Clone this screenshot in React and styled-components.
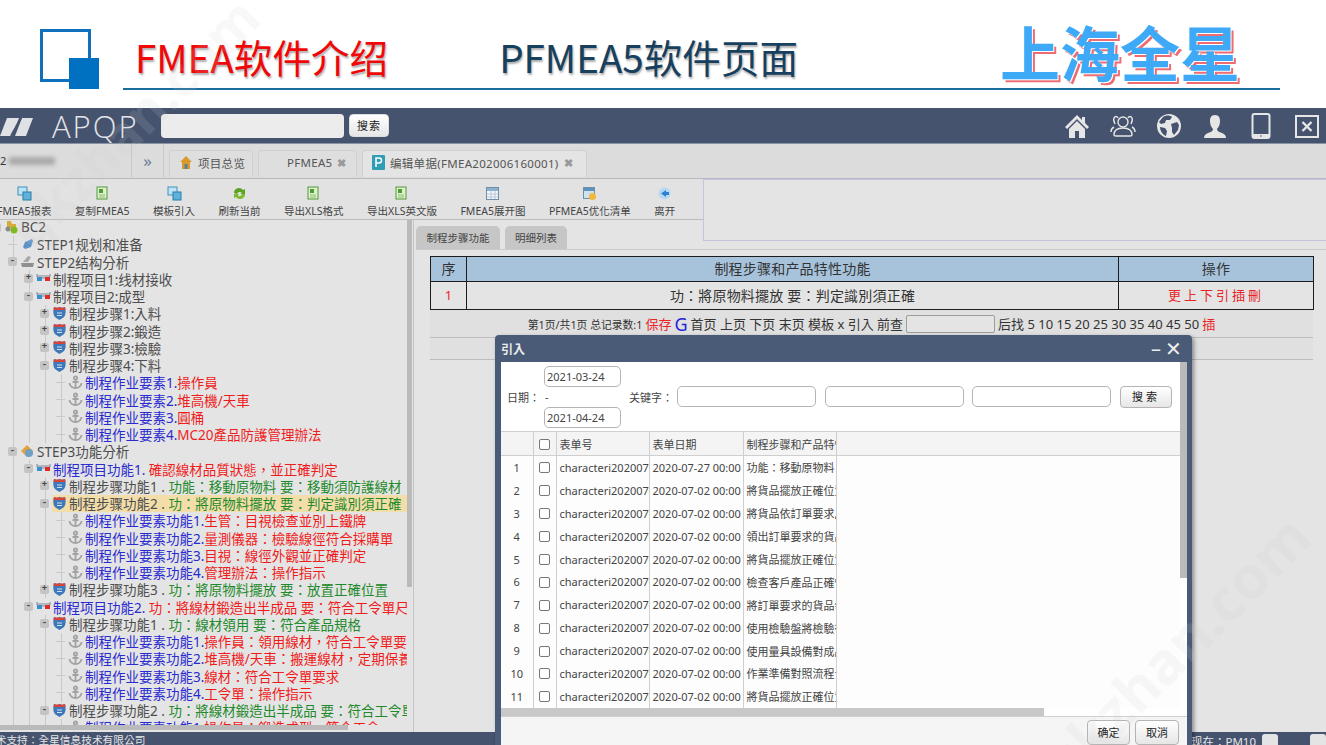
import React from 'react';
import styled, { createGlobalStyle } from 'styled-components';

const CJK = '"Noto Sans", "Noto Sans CJK TC", sans-serif';

const GlobalStyle = createGlobalStyle`
  html, body {
    margin: 0;
    padding: 0;
    background: #fff;
    font-family: ${CJK};
  }
  * { box-sizing: border-box; }
`;

const Page = styled.div`
  position: relative;
  display: flex;
  flex-direction: column;
  width: 1326px;
  height: 745px;
  overflow: hidden;
  background: #fff;
`;

/* slide heading */
const SlideHead = styled.header`
  display: flex;
  flex: 0 0 108px;
  padding: 29px 0 0 40px;
`;

const TitleBar = styled.div`
  display: flex;
  align-items: flex-end;
  width: 1157px;
  height: 61px;
  margin-left: 24px;
  padding-left: 12px;
  border-bottom: 2px solid #1a6c9c;
`;

const Title = styled.h1`
  margin: 0 0 5px ${(p) => p.$gap || 0}px;
  font: 400 38.6px/54px "Noto Sans CJK SC", sans-serif;
  white-space: nowrap;
  color: ${(p) => p.$color};
  text-shadow: 1px 2px 2px rgba(70, 70, 70, 0.45);
`;

const Brand = styled.div`
  margin: 0 40px 2px auto;
  font: 700 60px/70px "Noto Sans CJK SC", sans-serif;
  white-space: nowrap;
  color: #3eaaf7;
  text-shadow: 1px 1px 0 #fff, 3px 3px 0 #ee6b72;
`;

/* app top bar */
const NavBar = styled.div`
  display: flex;
  align-items: center;
  flex: 0 0 36px;
  background: #45536e;
  border-bottom: 1px solid #8a93a3;
`;

const AppName = styled.div`
  width: 105px;
  margin-left: 19px;
  font: 300 31px/34px "Open Sans", sans-serif;
  letter-spacing: 2px;
  color: #e2e4e8;
`;

const NavSearch = styled.input`
  width: 183px;
  height: 24px;
  margin: 0 5px 0 4px;
  border: 0;
  border-radius: 4px;
  background: #ececec;
`;

const SmallButton = styled.button`
  width: ${(p) => p.$w}px;
  height: ${(p) => p.$h}px;
  padding: 0;
  border: 1px solid ${(p) => (p.$flat ? '#dedede' : '#b4b4b4')};
  border-radius: 4px;
  background: linear-gradient(#ffffff, #e6e6e6);
  font: 11px/1 ${CJK};
  letter-spacing: ${(p) => p.$spaced || 0}px;
  color: #222;
`;

const NavIcons = styled.div`
  display: flex;
  align-items: center;
  gap: 20px;
  margin-left: auto;
  padding-right: 6px;
`;

/* tab row */
const TabRow = styled.div`
  display: flex;
  align-items: flex-end;
  flex: 0 0 35px;
  padding-bottom: 1px;
  background: #dcdcdc;
  border-bottom: 1px solid #b9b9bd;
`;

const Crumb = styled.div`
  display: flex;
  align-items: center;
  gap: 3px;
  width: 132px;
  height: 100%;
  border-right: 1px solid #c8c8c8;
  font-size: 11px;
  color: #333;
`;

const Smudge = styled.span`
  width: 46px;
  height: 8px;
  background: #aaa;
  filter: blur(2px);
`;

const More = styled.div`
  display: flex;
  align-items: center;
  justify-content: center;
  width: 32px;
  height: 100%;
  border-right: 1px solid #c8c8c8;
  font-size: 17px;
  color: #6a7c93;
`;

const Tabs = styled.div`
  display: flex;
  gap: 5px;
  margin-left: 5px;
`;

const PageTab = styled.div`
  display: flex;
  align-items: center;
  gap: 5px;
  width: ${(p) => p.$w}px;
  height: 27px;
  padding: 0 0 3px ${(p) => p.$pad}px;
  border: 1px solid #d0d0d0;
  border-bottom: 0;
  border-radius: 4px 4px 0 0;
  background: ${(p) => (p.$active ? '#e4e4e4' : '#dedede')};
  font-size: 11.5px;
  letter-spacing: 0.3px;
  white-space: nowrap;
  color: #555;
`;

const TabClose = styled.span`
  font-size: 11px;
  font-weight: 700;
  color: #999;
`;

/* tool row */
const ToolRow = styled.div`
  display: flex;
  align-items: flex-start;
  flex: 0 0 41px;
  min-height: 0;
  background: #e2e2e3;
  border-bottom: 1px solid #bdbdbd;
`;

const Tools = styled.div`
  display: flex;
  gap: 23.5px;
  margin-left: -3px;
  padding-top: 7px;
`;

const Tool = styled.div`
  display: flex;
  flex-direction: column;
  align-items: center;
  gap: 3px;
  font-size: 10.5px;
  line-height: 14px;
  white-space: nowrap;
  color: #444;
`;

const InfoBox = styled.div`
  position: relative;
  z-index: 1;
  flex: 0 0 623px;
  height: 62px;
  margin-left: auto;
  background: #e4e4e5;
  border: 1px solid #c4c4de;
  border-right: 0;
`;

/* main split */
const Main = styled.main`
  display: flex;
  flex: 1;
  min-height: 0;
  background: #e4e4e4;
`;

const TreePane = styled.aside`
  display: flex;
  flex-direction: column;
  flex: 0 0 414px;
  min-width: 0;
  overflow: hidden;
  border-right: 1px solid #c6c6c6;
`;

const TreeBody = styled.div`
  display: flex;
  flex: 0 0 505px;
  min-height: 0;
`;

const TreeClip = styled.div`
  flex: 1;
  min-width: 0;
  overflow: hidden;
`;

const TreeRoot = styled.div`
  margin: -1.5px 0 0 -2px;
`;

const VTrack = styled.div`
  flex: 0 0 6px;
`;

const Thumb = styled.div`
  flex: none;
  width: ${(p) => p.$w};
  height: ${(p) => p.$h};
  background: #bababa;
`;

const Branch = styled.div`
  margin-left: 15px;
  border-left: 1px solid #c9c9c9;
`;

const Row = styled.div`
  display: flex;
  align-items: center;
  height: 17.25px;
  margin-left: -6px;
  font-size: 13.5px;
  white-space: nowrap;
`;

const Toggle = styled.span`
  display: flex;
  align-items: center;
  justify-content: center;
  flex: 0 0 9px;
  height: 9px;
  border-radius: 2px;
  background: #c4c4c4;
  font: 700 9px/9px "Liberation Mono", monospace;
  color: #444;
`;

const Dash = styled.span`
  flex: 0 0 9px;
  margin-left: 0;
  border-top: 1px solid #c9c9c9;
`;

const Label = styled.span`
  display: flex;
  align-items: center;
  flex: 1;
  gap: 2px;
  height: 100%;
  margin-left: 3px;
  background: ${(p) => (p.$selected ? '#f3dda9' : 'transparent')};
`;

const toneColors = { ink: '#4d4d4d', blue: '#2a2ad0', red: '#ef1c1c', green: '#1f8a2c' };

const Part = styled.span`
  color: ${(p) => toneColors[p.$tone]};
`;

/* right side */
const Content = styled.section`
  flex: 1;
  min-width: 0;
  padding: 6px 13px 0 16px;
`;

const SubTabs = styled.div`
  display: flex;
  gap: 5px;
  height: 24px;
  margin: 0 -13px 6px -14px;
  border-bottom: 1px solid #cbcbcb;
`;

const SubTab = styled.div`
  display: flex;
  align-items: center;
  justify-content: center;
  width: ${(p) => p.$w}px;
  border-radius: 5px 5px 0 0;
  background: #c6c6c6;
  font-size: 10.5px;
  color: #444;
`;

const DataTable = styled.table`
  width: 883px;
  table-layout: fixed;
  border-collapse: collapse;
  font-size: 14px;
  letter-spacing: 0.2px;
  text-align: center;
  color: #333;

  th, td {
    padding: 0 0 2px;
    border: 1px solid #1c1c1c;
  }
  th {
    height: 25px;
    background: #a7c3dc;
    font-weight: 400;
  }
  td { height: 28px; }
`;

const RedText = styled.span`
  color: #e8262a;
  letter-spacing: ${(p) => p.$spaced || 0}px;
  font-size: 13px;
`;

const PagerBar = styled.div`
  display: flex;
  align-items: center;
  justify-content: center;
  gap: 3px;
  width: 883px;
  height: 28px;
  background: #e0e0e0;
  border-bottom: 1px solid #bcbcbc;
  font-size: 13px;
  white-space: nowrap;
  color: #333;
`;

const PagerStat = styled.span`
  font-size: 10.8px;
`;

const BlueG = styled.span`
  font-size: 18px;
  line-height: 20px;
  color: #2323d8;
`;

const PagerInput = styled.input`
  width: 89px;
  height: 18px;
  border: 1px solid #9c9c9c;
  border-radius: 2px;
  background: #e4e4e4;
`;

const EmptyBar = styled.div`
  width: 883px;
  height: 22px;
  background: #e0e0e0;
  border-bottom: 1px solid #bcbcbc;
`;

const AppFoot = styled.footer`
  display: flex;
  align-items: flex-start;
  flex: 0 0 13px;
  overflow: hidden;
  background: #45536e;
  font-size: 10.7px;
  line-height: 17px;
  white-space: nowrap;
  color: #e6e6e6;
`;

const FootLeft = styled.span`
  margin-left: -15px;
`;

const FootRight = styled.div`
  display: flex;
  gap: 6px;
  margin-left: auto;
  padding-top: 2px;
  font-size: 11.5px;
  line-height: 15px;
`;

const FootGlyph = styled.span`
  width: 16px;
  height: 14px;
  margin-left: ${(p) => p.$gap || 0}px;
  border-radius: 3px 3px 0 0;
  background: #e4e4e4;
`;

/* dialog */
const Dialog = styled.div`
  position: absolute;
  left: 495px;
  top: 335px;
  z-index: 2;
  display: flex;
  flex-direction: column;
  width: 697px;
  height: 420px;
  padding: 0 5px 0 6px;
  border-radius: 4px 4px 0 0;
  background: #4a5b78;
  box-shadow: 2px 2px 4px rgba(0, 0, 0, 0.4);
`;

const DialogHead = styled.div`
  display: flex;
  align-items: center;
  justify-content: space-between;
  flex: 0 0 27px;
  font-size: 12px;
  font-weight: 700;
  color: #ececec;
`;

const DialogActions = styled.div`
  display: flex;
  align-items: center;
  gap: 4px;
  padding-right: 5px;
  font-size: 20px;
  font-weight: 400;
  line-height: 20px;
`;

const DialogBody = styled.div`
  display: flex;
  flex-direction: column;
  flex: 1;
  min-height: 0;
  background: #fff;
`;

const DialogUpper = styled.div`
  display: flex;
  flex: 0 0 354px;
`;

const DialogMain = styled.div`
  display: flex;
  flex-direction: column;
  flex: 1;
  min-width: 0;
`;

const DialogTrack = styled.div`
  flex: 0 0 7px;
`;

const FilterForm = styled.form`
  display: flex;
  align-items: center;
  flex: 0 0 70px;
  padding-left: 6px;
  border-bottom: 1px solid #cfcfcf;
  font-size: 11px;
  color: #444;
`;

const FilterLabel = styled.label`
  flex: 0 0 ${(p) => p.$w}px;
  white-space: nowrap;
`;

const DateStack = styled.div`
  display: flex;
  flex-direction: column;
  flex: 0 0 85px;
  gap: 3px;
  font-size: 11px;
`;

const DateDash = styled.span`
  height: 14px;
  padding-left: 1px;
  line-height: 14px;
`;

const FieldInput = styled.input`
  width: ${(p) => p.$w}px;
  height: ${(p) => p.$h}px;
  margin-right: ${(p) => p.$mr || 0}px;
  padding: 0 2px;
  border: 1px solid #b4b4b4;
  border-radius: 5px;
  background: #fff;
  font: 11px ${CJK};
  color: #444;
`;

const GridWrap = styled.div`
  flex: 0 0 276px;
  background: #fdfdfd;
`;

const GridHeadBar = styled.div`
  height: 24px;
  background: #f4f4f4;
  border-bottom: 1px solid #cfcfcf;
`;

const Grid = styled.table`
  width: 335px;
  margin-top: -24px;
  table-layout: fixed;
  border-collapse: collapse;
  font-size: 11px;
  color: #444;

  th, td {
    padding: 0 0 0 3px;
    overflow: hidden;
    border-right: 1px solid #cfcfcf;
    font-weight: 400;
    text-align: left;
    white-space: nowrap;
  }
  th { height: 24px; }
  td { height: 22.9px; }
`;

const RowNo = styled.td`
  && {
    padding: 0;
    text-align: center;
  }
`;

const CheckCell = styled.td`
  && {
    padding: 0;
    text-align: center;
  }
`;

const CheckHead = styled.th`
  && {
    padding: 0;
    text-align: center;
  }
`;

const Check = styled.input`
  display: block;
  width: 11px;
  height: 11px;
  margin: 1px auto 0;
  appearance: none;
  border: 1px solid #777;
  border-radius: 2px;
  background: #fff;
`;

const HScroll = styled.div`
  flex: 0 0 8px;
  width: 543px;
  background: #c8c8c8;
`;

const DialogFoot = styled.div`
  display: flex;
  align-items: flex-start;
  justify-content: flex-end;
  gap: 5px;
  flex: 1;
  padding: 3px 8px 0 0;
  background: #f5f5f5;
  border-top: 1px solid #d0d0d0;
`;

const Watermark = styled.div`
  position: absolute;
  left: ${(p) => p.$x}px;
  top: ${(p) => p.$y}px;
  z-index: 3;
  font: 700 ${(p) => p.$size}px/1 "Noto Sans", sans-serif;
  white-space: nowrap;
  color: rgba(205, 205, 205, 0.14);
  transform: rotate(-45deg);
  pointer-events: none;
`;

function SlideLogo() {
  return (
    <svg width="59" height="60" viewBox="0 0 59 60">
      <rect x="1.5" y="1.5" width="48" height="50" fill="none" stroke="#0f71bd" strokeWidth="3" />
      <rect x="29" y="29" width="30" height="31" fill="#0070c0" />
    </svg>
  );
}

function AppMark() {
  return (
    <svg width="33" height="18" viewBox="0 0 33 18" style={{ marginTop: 2 }}>
      <path d="M7 0H19L12 18H0Z" fill="#dfe1e4" />
      <path d="M22 0H33L26 18H15Z" fill="#dfe1e4" />
      <path d="M21 0L11 18" stroke="#45536e" strokeWidth="2" />
    </svg>
  );
}

const navFill = '#e6e6e6';

function NavIcon({ kind }) {
  const shapes = {
    home: (
      <>
        <path d="M13 2L1 14l2 2L13 6l10 10 2-2-4-4V4h-3v3Z" fill={navFill} />
        <path d="M5 16l8-8 8 8v9h-6v-7h-4v7H5Z" fill={navFill} />
      </>
    ),
    users: (
      <g fill="none" stroke={navFill} strokeWidth="1.4">
        <circle cx="13" cy="9" r="5" />
        <path d="M4 22c0-5 4-7 9-7s9 2 9 7c0 1-1 1-2 1H6c-1 0-2 0-2-1Z" />
        <path d="M8 5C7 3 5 3 4 5 3 7 4 9 5 11M18 5c1-2 3-2 4 0 1 2 0 4-1 6M4 14c-2 1-3 3-3 5M22 14c2 1 3 3 3 5" />
      </g>
    ),
    globe: (
      <>
        <circle cx="13" cy="13" r="12" fill={navFill} />
        <path d="M7 4c3-2 7-2 9 0l-2 3-4 0-1 3-4 1-2-2ZM15 11l6-2 2 3-1 5-4 5-2-3 0-4ZM4 14l5 1 2 3-1 5c-3-1-6-5-6-9Z" fill="#45536e" />
      </>
    ),
    user: (
      <path d="M13 2c4 0 5 3 5 6 0 3-1 6-3 8 0 2 2 3 5 4 3 1 4 3 4 5H2c0-2 1-4 4-5 3-1 5-2 5-4-2-2-3-5-3-8 0-3 1-6 5-6Z" fill={navFill} />
    ),
    tablet: (
      <>
        <rect x="4.5" y="1" width="17" height="24" rx="2" fill="none" stroke={navFill} strokeWidth="2" />
        <rect x="4" y="21" width="18" height="4" rx="1" fill={navFill} />
        <circle cx="13" cy="23" r="0.8" fill="#45536e" />
      </>
    ),
    close: (
      <>
        <rect x="2" y="3" width="22" height="21" fill="none" stroke={navFill} strokeWidth="2" />
        <path d="M8.5 9l9 9M17.5 9l-9 9" stroke={navFill} strokeWidth="2.4" />
      </>
    ),
  };
  return <svg width="26" height="26" viewBox="0 0 26 26">{shapes[kind]}</svg>;
}

function ToolIcon({ kind }) {
  const shapes = {
    blue: (
      <>
        <rect x="1" y="1" width="9" height="8" fill="#bfe3f5" stroke="#3a93bd" />
        <rect x="6" y="6" width="8" height="8" fill="#5fb2dc" stroke="#2b7ca5" />
      </>
    ),
    green: (
      <>
        <rect x="2" y="1" width="10" height="12" fill="#dff1c8" stroke="#4f9a3c" />
        <rect x="4" y="3" width="4" height="4" fill="#4f9a3c" />
        <path d="M4 9h6M4 11h6" stroke="#8abf6e" />
      </>
    ),
    refresh: (
      <>
        <path d="M2 7a5 5 0 0 1 9-3l2-1v5H8l2-1a3 3 0 0 0-5 1Z" fill="#5aa323" />
        <path d="M13 8a5 5 0 0 1-9 3l-2 1V8h5l-1 2a3 3 0 0 0 4-2Z" fill="#7cbb2e" />
      </>
    ),
    grid: (
      <>
        <rect x="1.5" y="1.5" width="12" height="12" fill="#f4f7fa" stroke="#6f8ea8" />
        <rect x="2" y="2" width="11" height="3" fill="#8fb2cc" />
        <path d="M2 8h11M2 11h11M6 5v8M10 5v8" stroke="#b7c8d6" />
      </>
    ),
    chart: (
      <>
        <rect x="1.5" y="1.5" width="11" height="11" fill="#cfe0ee" stroke="#6f8ea8" />
        <rect x="2" y="2" width="10" height="3" fill="#5e93bd" />
        <circle cx="10.5" cy="10.5" r="3.5" fill="#f0b93a" />
      </>
    ),
    back: (
      <>
        <circle cx="7.5" cy="7.5" r="6" fill="#b6d8f2" />
        <path d="M9 4v2h3v3H9v2L4 7.5Z" fill="#2f7ed0" />
      </>
    ),
  };
  return <svg width="15" height="15" viewBox="0 0 15 15">{shapes[kind]}</svg>;
}

function TreeIcon({ kind }) {
  const shapes = {
    star: (
      <>
        <path d="M3 1h4l1 3h4v4H3Z" fill="#d8a93c" />
        <circle cx="4" cy="9" r="2.5" fill="#8a8a8a" />
        <circle cx="10" cy="10" r="3.5" fill="#83b822" />
      </>
    ),
    pin: <path d="M12 2L5 5 3 10l2 2 6-2 2-6Z" fill="#5b93c7" />,
    tool: (
      <>
        <path d="M3 8l5-6 3 1-3 5Z" fill="#a8a8a8" />
        <path d="M1 9h13l-1 4H2Z" fill="#8f8f8f" />
      </>
    ),
    gear: (
      <>
        <path d="M7 1l6 6-6 6-6-6Z" fill="#e6a13a" />
        <circle cx="9" cy="9" r="4" fill="#6f9ec6" />
      </>
    ),
    glasses: (
      <>
        <path d="M1 3v3M14 3v3M1 5h13" stroke="#7c8898" fill="none" />
        <rect x="1" y="6" width="5" height="4" fill="#3a8ecb" />
        <rect x="9" y="6" width="5" height="4" fill="#de2a2a" />
        <path d="M6 7h3" stroke="#7c8898" />
      </>
    ),
    shield: (
      <>
        <path d="M2 1c2 1 4 1 5.500 0 1.500 1 3.500 1 5.500 0 1 3 1 8-1 10-1 1-3 2-4.500 3-1.500-1-3.500-2-4.500-3-2-2-2-7-1-10Z" fill="#3f78b8" />
        <path d="M2 1c2 1 4 1 5.500 0 1.500 1 3.500 1 5.500 0l.4 3H1.600Z" fill="#d8433a" />
        <path d="M5 7h5M5 9.500h5" stroke="#cfe2f3" />
      </>
    ),
    anchor: (
      <g fill="none" stroke="#a2a2a2" strokeWidth="1.8">
        <circle cx="7.500" cy="3" r="1.600" />
        <path d="M7.500 4.500v8.500M4.500 7h6M1.500 8c0 3 3 5 6 5s6-2 6-5" />
      </g>
    ),
  };
  return (
    <svg width="15" height="15" viewBox="0 0 15 15" style={{ flex: '0 0 15px' }}>
      {shapes[kind]}
    </svg>
  );
}

const node = (icon, parts, children, opts = {}) => ({ icon, parts, children, ...opts });
const leaf = (blue, red) => node('anchor', [['blue', blue], ['red', red]]);
const step = (ink, green, children, opts) =>
  node('shield', [['ink', ink], ['green', green]], children, opts);

const treeData = node('star', [['ink', 'BC2']], [
  node('pin', [['ink', 'STEP1规划和准备']]),
  node('tool', [['ink', 'STEP2结构分析']], [
    node('glasses', [['ink', '制程项目1:线材接收']], null, { closed: true }),
    node('glasses', [['ink', '制程项目2:成型']], [
      step('制程步骤1:入料', '', null, { closed: true }),
      step('制程步骤2:鍛造', '', null, { closed: true }),
      step('制程步骤3:檢驗', '', null, { closed: true }),
      step('制程步骤4:下料', '', [
        leaf('制程作业要素1.', '操作員'),
        leaf('制程作业要素2.', '堆高機/天車'),
        leaf('制程作业要素3.', '圓桶'),
        leaf('制程作业要素4.', 'MC20產品防護管理辦法'),
      ]),
    ]),
  ]),
  node('gear', [['ink', 'STEP3功能分析']], [
    node('glasses', [['blue', '制程项目功能1. '], ['red', '確認線材品質狀態，並正確判定']], [
      step('制程步骤功能1 . ', '功能：移動原物料 要：移動須防護線材', null, { closed: true }),
      step('制程步骤功能2 . ', '功：將原物料擺放 要：判定識別須正確', [
        leaf('制程作业要素功能1.', '生管：目視檢查並別上鐵牌'),
        leaf('制程作业要素功能2.', '量測儀器：檢驗線徑符合採購單'),
        leaf('制程作业要素功能3.', '目視：線徑外觀並正確判定'),
        leaf('制程作业要素功能4.', '管理辦法：操作指示'),
      ], { selected: true }),
      step('制程步骤功能3 . ', '功：將原物料擺放 要：放置正確位置', null, { closed: true }),
    ]),
    node('glasses', [['blue', '制程项目功能2. '], ['red', '功：將線材鍛造出半成品 要：符合工令單尺寸']], [
      step('制程步骤功能1 . ', '功：線材領用 要：符合產品規格', [
        leaf('制程作业要素功能1.', '操作員：領用線材，符合工令單要求'),
        leaf('制程作业要素功能2.', '堆高機/天車：搬運線材，定期保養'),
        leaf('制程作业要素功能3.', '線材：符合工令單要求'),
        leaf('制程作业要素功能4.', '工令單：操作指示'),
      ]),
      step('制程步骤功能2 . ', '功：將線材鍛造出半成品 要：符合工令單', [
        leaf('制程作业要素功能1.', '操作員：鍛造成型，符合工令'),
      ]),
    ]),
  ]),
]);

function TreeNode({ data }) {
  const { icon, parts, children, closed, selected } = data;
  const hasToggle = children || closed;
  return (
    <>
      <Row>
        {hasToggle ? <Toggle>{closed ? '+' : '-'}</Toggle> : <Dash />}
        <Label $selected={selected}>
          <TreeIcon kind={icon} />
          <span>
            {parts.map(([tone, text], i) => (
              <Part key={i} $tone={tone}>{text}</Part>
            ))}
          </span>
        </Label>
      </Row>
      {children ? (
        <Branch>
          {children.map((child, i) => (
            <TreeNode key={i} data={child} />
          ))}
        </Branch>
      ) : null}
    </>
  );
}

const tools = [
  ['blue', 'FMEA5报表'],
  ['green', '复制FMEA5'],
  ['blue', '模板引入'],
  ['refresh', '刷新当前'],
  ['green', '导出XLS格式'],
  ['green', '导出XLS英文版'],
  ['grid', 'FMEA5展开图'],
  ['chart', 'PFMEA5优化清单'],
  ['back', '离开'],
];

const gridRows = [
  ['characteri2020072', '2020-07-27 00:00', '功能：移動原物料'],
  ['characteri2020070', '2020-07-02 00:00', '將貨品擺放正確位置'],
  ['characteri2020070', '2020-07-02 00:00', '將貨品依訂單要求,'],
  ['characteri2020070', '2020-07-02 00:00', '領出訂單要求的貨品'],
  ['characteri2020070', '2020-07-02 00:00', '將貨品擺放正確位置'],
  ['characteri2020070', '2020-07-02 00:00', '檢查客戶產品正確性'],
  ['characteri2020070', '2020-07-02 00:00', '將訂單要求的貨品領'],
  ['characteri2020070', '2020-07-02 00:00', '使用檢驗盤將檢驗後'],
  ['characteri2020070', '2020-07-02 00:00', '使用量具設備對成品'],
  ['characteri2020070', '2020-07-02 00:00', '作業準備對照流程卡'],
  ['characteri2020070', '2020-07-02 00:00', '將貨品擺放正確位置'],
];

export default function App() {
  return (
    <Page>
      <GlobalStyle />
      <SlideHead>
        <SlideLogo />
        <TitleBar>
          <Title $color="#f00808">FMEA软件介绍</Title>
          <Title $color="#17405f" $gap={111}>PFMEA5软件页面</Title>
          <Brand>上海全星</Brand>
        </TitleBar>
      </SlideHead>

      <NavBar>
        <AppMark />
        <AppName>APQP</AppName>
        <NavSearch />
        <SmallButton $w={40} $h={23} $flat $spaced={1}>搜索</SmallButton>
        <NavIcons>
          {['home', 'users', 'globe', 'user', 'tablet', 'close'].map((k) => (
            <NavIcon key={k} kind={k} />
          ))}
        </NavIcons>
      </NavBar>

      <TabRow>
        <Crumb>2<Smudge /></Crumb>
        <More>»</More>
        <Tabs>
          <PageTab $w={84} $pad={9}>
            <svg width="14" height="15" viewBox="0 0 14 15">
              <path d="M7 1L1 7h2v7h8V7h2Z" fill="#d99a2b" />
              <rect x="5.500" y="9" width="3" height="5" fill="#5f7d9c" />
            </svg>
            项目总览
          </PageTab>
          <PageTab $w={99} $pad={28}>
            PFMEA5 <TabClose>✖</TabClose>
          </PageTab>
          <PageTab $w={225} $pad={9} $active>
            <svg width="13" height="15" viewBox="0 0 13 15">
              <rect width="13" height="15" rx="1" fill="#2f9db3" />
              <path d="M4 12V3h3a2.500 2.500 0 0 1 0 5H4" fill="none" stroke="#fff" strokeWidth="1.500" />
            </svg>
            编辑单据(FMEA202006160001) <TabClose>✖</TabClose>
          </PageTab>
        </Tabs>
      </TabRow>

      <ToolRow>
        <Tools>
          {tools.map(([icon, text]) => (
            <Tool key={text}>
              <ToolIcon kind={icon} />
              {text}
            </Tool>
          ))}
        </Tools>
        <InfoBox />
      </ToolRow>

      <Main>
        <TreePane>
          <TreeBody>
            <TreeClip>
              <TreeRoot>
                <TreeNode data={treeData} />
              </TreeRoot>
            </TreeClip>
            <VTrack>
              <Thumb $w="5px" $h="367px" />
            </VTrack>
          </TreeBody>
          <Thumb $w="348px" $h="5px" />
        </TreePane>

        <Content>
          <SubTabs>
            <SubTab $w={84}>制程步骤功能</SubTab>
            <SubTab $w={62}>明细列表</SubTab>
          </SubTabs>
          <DataTable>
            <colgroup>
              <col width="36" />
              <col width="652" />
              <col width="195" />
            </colgroup>
            <thead>
              <tr>
                <th>序</th>
                <th>制程步骤和产品特性功能</th>
                <th>操作</th>
              </tr>
            </thead>
            <tbody>
              <tr>
                <td><RedText>1</RedText></td>
                <td>功：將原物料擺放 要：判定識別須正確</td>
                <td><RedText $spaced={3}>更上下引插刪</RedText></td>
              </tr>
            </tbody>
          </DataTable>
          <PagerBar>
            <PagerStat>第1页/共1页 总记录数:1</PagerStat>
            <RedText>保存</RedText>
            <BlueG>G</BlueG>
            首页 上页 下页 末页 模板 x 引入 前查
            <PagerInput />
            后找 5 10 15 20 25 30 35 40 45 50
            <RedText>插</RedText>
          </PagerBar>
          <EmptyBar />
        </Content>
      </Main>

      <AppFoot>
        <FootLeft>技术支持：全星信息技术有限公司</FootLeft>
        <FootRight>
          现在：PM10
          <FootGlyph />
          <FootGlyph $gap={26} />
        </FootRight>
      </AppFoot>

      <Dialog>
        <DialogHead>
          引入
          <DialogActions>
            <span>–</span>
            <span>✕</span>
          </DialogActions>
        </DialogHead>
        <DialogBody>
          <DialogUpper>
            <DialogMain>
              <FilterForm>
                <FilterLabel $w={37}>日期：</FilterLabel>
                <DateStack>
                  <FieldInput $w={77} $h={21} defaultValue="2021-03-24" />
                  <DateDash>-</DateDash>
                  <FieldInput $w={77} $h={21} defaultValue="2021-04-24" />
                </DateStack>
                <FilterLabel $w={48}>关键字：</FilterLabel>
                <FieldInput $w={139} $h={21} $mr={9} />
                <FieldInput $w={139} $h={21} $mr={8} />
                <FieldInput $w={139} $h={21} $mr={9} />
                <SmallButton $w={52} $h={22} $spaced={3}>搜索</SmallButton>
              </FilterForm>
              <GridWrap>
                <GridHeadBar />
                <Grid>
                  <colgroup>
                    <col width="32" />
                    <col width="23" />
                    <col width="93" />
                    <col width="94" />
                    <col width="93" />
                  </colgroup>
                  <thead>
                    <tr>
                      <th />
                      <CheckHead><Check type="checkbox" /></CheckHead>
                      <th>表单号</th>
                      <th>表单日期</th>
                      <th>制程步骤和产品特性</th>
                    </tr>
                  </thead>
                  <tbody>
                    {gridRows.map(([code, date, text], i) => (
                      <tr key={i}>
                        <RowNo>{i + 1}</RowNo>
                        <CheckCell><Check type="checkbox" /></CheckCell>
                        <td>{code}</td>
                        <td>{date}</td>
                        <td>{text}</td>
                      </tr>
                    ))}
                  </tbody>
                </Grid>
              </GridWrap>
              <HScroll />
            </DialogMain>
            <DialogTrack>
              <Thumb $w="7px" $h="216px" />
            </DialogTrack>
          </DialogUpper>
          <DialogFoot>
            <SmallButton $w={43} $h={25}>确定</SmallButton>
            <SmallButton $w={44} $h={25}>取消</SmallButton>
          </DialogFoot>
        </DialogBody>
      </Dialog>

      <Watermark $x={-30} $y={95} $size={54}>gkzhan.com</Watermark>
      <Watermark $x={1000} $y={620} $size={58}>gkzhan.com</Watermark>
    </Page>
  );
}
